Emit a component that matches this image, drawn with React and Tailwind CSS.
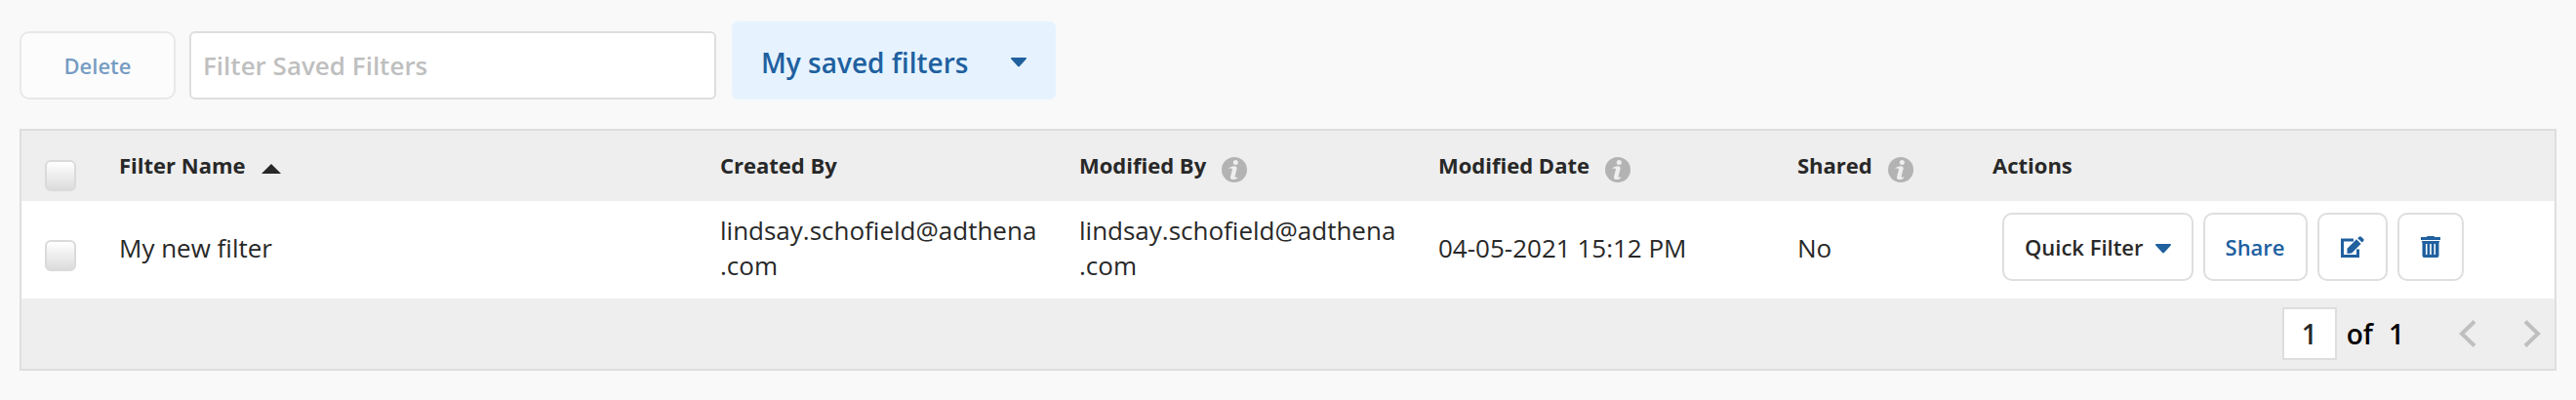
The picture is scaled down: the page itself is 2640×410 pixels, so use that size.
import React, { useState } from 'react';

const columns = [
  { key: 'name', label: 'Filter Name', sorted: true },
  { key: 'createdBy', label: 'Created By' },
  { key: 'modifiedBy', label: 'Modified By', info: true },
  { key: 'modifiedDate', label: 'Modified Date', info: true },
  { key: 'shared', label: 'Shared', info: true },
];

const filters = [
  {
    id: 1,
    name: 'My new filter',
    createdBy: 'lindsay.schofield@adthena.com',
    modifiedBy: 'lindsay.schofield@adthena.com',
    modifiedDate: '04-05-2021 15:12 PM',
    shared: 'No',
  },
];

const buttonClass =
  'flex h-[70px] items-center rounded-[10px] border-2 border-[#dedede] bg-white text-[22px] font-semibold text-[#20609f]';

function Caret({ className }) {
  return (
    <svg viewBox="0 0 16 10" className={className} fill="currentColor" aria-hidden="true">
      <path d="M1 0h14c.9 0 1.300 1 .7 1.600L8.900 9.100c-.5.600-1.300.600-1.800 0L.3 1.600C-.3 1 .1 0 1 0Z" />
    </svg>
  );
}

function InfoIcon() {
  return (
    <svg viewBox="0 0 26 26" className="mt-1 ml-4 inline-block size-[26px] align-middle" aria-hidden="true">
      <circle cx="13" cy="13" r="13" fill="#b3b3b3" />
      <circle cx="14.300" cy="5.500" r="2.500" fill="#eee" />
      <path
        d="M6.800 11.800c2.100-1.900 5-2.800 7.200-2.400 1.500.3 1.900 1.300 1.600 2.700l-1.900 7.300c-.2.900.1 1.500.8 1.400l1.800-.4-.2 1c-1.600 1.200-3.500 1.700-5.100 1.500-1.700-.2-2.300-1.400-2-2.700l1.800-6.900c.2-1-.1-1.800-1-1.900l-3 .4Z"
        fill="#eee"
      />
    </svg>
  );
}

function EditIcon() {
  return (
    <svg viewBox="0 0 24 22" className="h-[22px] w-6" aria-hidden="true">
      <path d="M13 4H1.500v16.500h16V13.500" fill="none" stroke="currentColor" strokeWidth="3" />
      <path d="M6.500 18v-5.200L16 3.300l4.600 4.600L11.200 17.400Z" fill="currentColor" />
      <path d="m17.200 2.200 1.500-1.500c.7-.7 1.500-.7 2.200 0l2.300 2.300c.7.700.7 1.400 0 2.100l-1.500 1.500Z" fill="currentColor" />
    </svg>
  );
}

function TrashIcon() {
  return (
    <svg viewBox="0 0 20 22" className="h-[22px] w-5" aria-hidden="true">
      <path d="M0 1h6V.5L7 0h6l1 .5V1h6v3H0Z" fill="currentColor" />
      <path
        fillRule="evenodd"
        d="M1 5h18v1.500h-.5V20a2 2 0 0 1-2 2h-13a2 2 0 0 1-2-2V6.500H1ZM5 8v11h1.500V8Zm4.200 0v11h1.600V8Zm4.300 0v11H15V8Z"
        fill="currentColor"
      />
    </svg>
  );
}

function Chevron({ direction }) {
  return (
    <svg viewBox="0 0 18 28" className="h-7 w-[18px]" fill="none" stroke="#bfbfbf" strokeWidth="4" aria-hidden="true">
      <path d={direction === 'left' ? 'M16 1.500 3 14l13 12.500' : 'M2 1.500 15 14 2 26.500'} />
    </svg>
  );
}

function Checkbox({ label, checked, onChange }) {
  return (
    <input
      type="checkbox"
      aria-label={label}
      checked={checked}
      onChange={onChange}
      className="block size-8 appearance-none rounded-md border-2 border-[#dadada] bg-linear-to-b from-white to-[#dcdcdc] checked:to-[#20609f]"
    />
  );
}

function App() {
  const [search, setSearch] = useState('');
  const [selected, setSelected] = useState([]);
  const [page, setPage] = useState('1');

  const toggle = (id) =>
    setSelected(selected.includes(id) ? selected.filter((s) => s !== id) : [...selected, id]);
  const toggleAll = () => setSelected(selected.length === filters.length ? [] : filters.map((f) => f.id));

  return (
    <div className="min-h-screen bg-[#f9f9f9] px-5 pt-[22px] pb-[30px] font-['Open_Sans',sans-serif] text-[26px] leading-9 text-[#282828]">
      {/* Toolbar */}
      <div className="mb-[30px] flex items-end">
        <button disabled={!selected.length} className={`${buttonClass} w-40 justify-center disabled:opacity-60`}>
          Delete
        </button>
        <input
          type="text"
          aria-label="Filter Saved Filters"
          placeholder="Filter Saved Filters"
          value={search}
          onChange={(e) => setSearch(e.target.value)}
          className="ml-3.5 h-[70px] w-[540px] rounded-md border-2 border-[#dedede] bg-white px-3 font-semibold placeholder:text-[#bfbfbf]"
        />
        <div className="ml-4 grid h-20 w-[332px] items-center rounded-md bg-[#e6f3ff] text-[#20609f]">
          <select
            aria-label="Filter list"
            className="col-start-1 row-start-1 h-20 w-full appearance-none bg-transparent pt-1 pr-14 pl-[30px] text-[28px] font-semibold"
          >
            <option>My saved filters</option>
            <option>All filters</option>
          </select>
          <Caret className="pointer-events-none col-start-1 row-start-1 mt-1 mr-[30px] h-2.5 w-4 justify-self-end" />
        </div>
      </div>

      {/* Saved filters */}
      <div className="border-2 border-[#dedede] bg-[#eee]">
        <table className="w-full table-fixed text-left">
          <colgroup>
            <col className="w-[100px]" />
            <col />
            <col className="w-[368px]" />
            <col className="w-[368px]" />
            <col className="w-[368px]" />
            <col className="w-[200px]" />
            <col className="w-[576px]" />
          </colgroup>
          <thead>
            <tr className="h-[72px] text-[22px]">
              <th className="pt-5 pl-6">
                <Checkbox
                  label="Select all filters"
                  checked={selected.length === filters.length}
                  onChange={toggleAll}
                />
              </th>
              {columns.map((col) => (
                <th key={col.key} className="pb-0.5 font-bold">
                  {col.label}
                  {col.sorted && (
                    <svg viewBox="0 0 20 10" className="ml-4 inline-block h-2.5 w-5 align-baseline" aria-hidden="true">
                      <path d="M0 10 10 0l10 10Z" fill="currentColor" />
                    </svg>
                  )}
                  {col.info && <InfoIcon />}
                </th>
              ))}
              <th className="pb-0.5 font-bold">Actions</th>
            </tr>
          </thead>
          <tbody>
            {filters.map((filter) => (
              <tr key={filter.id} className="bg-white">
                <td className="pt-3 pl-6">
                  <Checkbox
                    label={`Select ${filter.name}`}
                    checked={selected.includes(filter.id)}
                    onChange={() => toggle(filter.id)}
                  />
                </td>
                {columns.map((col) => (
                  <td key={col.key} className="pr-10 pb-1 wrap-break-word">
                    {filter[col.key]}
                  </td>
                ))}
                <td className="pt-3 pb-[18px] pl-2.5">
                  <div className="flex gap-2.5">
                    <button className={`${buttonClass} gap-3 px-[21px]`}>
                      <span className="text-[#282828]">Quick Filter</span>
                      <Caret className="mt-1 h-2.5 w-4" />
                    </button>
                    <button className={`${buttonClass} px-[21px]`}>Share</button>
                    <button aria-label="Edit" className={`${buttonClass} px-[22px]`}>
                      <EditIcon />
                    </button>
                    <button aria-label="Delete filter" className={`${buttonClass} px-[22px]`}>
                      <TrashIcon />
                    </button>
                  </div>
                </td>
              </tr>
            ))}
          </tbody>
        </table>

        {/* Pagination */}
        <div className="flex h-[72px] items-center justify-end pr-3.5 text-[28px] font-semibold text-black">
          <input
            type="text"
            aria-label="Page"
            value={page}
            onChange={(e) => setPage(e.target.value)}
            className="mr-2.5 h-[54px] w-14 border-2 border-[#dedede] bg-white text-center text-[#282828]"
          />
          <span className="mr-4">of</span>
          <span>1</span>
          <button aria-label="Previous page" className="ml-14">
            <Chevron direction="left" />
          </button>
          <button aria-label="Next page" className="ml-12">
            <Chevron direction="right" />
          </button>
        </div>
      </div>
    </div>
  );
}

export default App;
